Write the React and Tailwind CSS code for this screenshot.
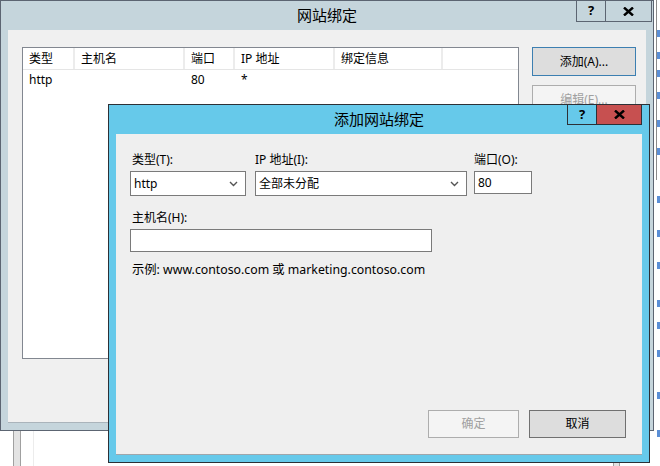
import React from "react";

const font = { fontFamily: '"Noto Sans", "Noto Sans CJK SC", sans-serif' };

const CloseGlyph = ({ className = "" }) => (
  <svg width="11" height="9" viewBox="0 0 11 9" className={className}>
    <path d="M1 0.5 L10 8.5 M10 0.5 L1 8.5" stroke="#000" strokeWidth="2.4" />
  </svg>
);

const Chevron = () => (
  <svg width="9" height="6" viewBox="0 0 9 6">
    <path d="M1 1 L4.5 4.5 L8 1" stroke="#555" strokeWidth="1.4" fill="none" />
  </svg>
);

const columns = [
  { label: "类型", w: "w-[52px]" },
  { label: "主机名", w: "w-[110px]" },
  { label: "端口", w: "w-[50px]" },
  { label: "IP 地址", w: "w-[100px]" },
  { label: "绑定信息", w: "w-[108px]" },
];

const row = ["http", "", "80", "*", ""];

// scattered link fragments of the window behind
const marks = [30, 52, 70, 92, 120, 148, 196, 230, 262, 300, 322, 350, 392, 430];

const SitesBindings = () => (
  <div className="absolute left-0 top-0 w-[654px] h-[431px] border border-[#5c6572] bg-[#c5d5dc] flex flex-col">
    <div className="relative h-[29px] flex items-center justify-center">
      <span className="text-[15px] text-black -mt-[1px]">网站绑定</span>
      <div className="absolute right-[1px] top-[-1px] flex">
        <div className="w-[30px] h-[22px] border border-[#5c6572] flex items-center justify-center text-[13px] font-bold">
          ?
        </div>
        <div className="w-[46px] h-[22px] border border-l-0 border-[#5c6572] flex items-center justify-center">
          <CloseGlyph />
        </div>
      </div>
    </div>
    <div className="mx-[7px] flex-1 mb-[7px] bg-[#f0f0f0] border-b border-[#aab4bb] flex pt-[17px] pl-[14px] gap-[13px]">
      <div className="w-[497px] h-[312px] bg-white border border-[#828790] text-[12px] text-black">
        <div className="flex h-[22px] border-b border-[#e5e5e5]">
          {columns.map((c) => (
            <div key={c.label} className={`${c.w} h-full pl-[6px] flex items-center border-r-2 border-[#ececec]`}>
              {c.label}
            </div>
          ))}
        </div>
        <div className="flex h-[20px]">
          {row.map((v, i) => (
            <div key={i} className={`${columns[i].w} pl-[6px] flex items-center`}>
              {v}
            </div>
          ))}
        </div>
      </div>
      <div className="flex flex-col gap-[9px] text-[12px]">
        <div className="w-[104px] h-[29px] bg-[#dddddd] border border-[#3c7fb1] flex items-center justify-center text-black">
          添加(A)...
        </div>
        <div className="w-[104px] h-[29px] bg-[#f4f4f4] border border-[#adadad] flex items-center justify-center text-[#a0a0a0]">
          编辑(E)...
        </div>
      </div>
    </div>
  </div>
);

const AddBinding = () => (
  <div className="absolute left-[108px] top-[104px] w-[542px] h-[359px] border border-[#2d3036] bg-[#66c9ea] flex flex-col">
    <div className="relative h-[29px] flex items-center justify-center">
      <span className="text-[15px] text-black">添加网站绑定</span>
      <div className="absolute right-[7px] top-[-1px] flex">
        <div className="w-[30px] h-[21px] border border-[#2d3036] flex items-center justify-center text-[13px] font-bold">
          ?
        </div>
        <div className="w-[45px] h-[21px] border border-l-0 border-[#2d3036] bg-[#c75050] flex items-center justify-center">
          <CloseGlyph />
        </div>
      </div>
    </div>
    <div className="mx-[7px] mb-[7px] flex-1 bg-[#efefef] border-b border-[#9fa6ab] flex flex-col text-[12px] text-black pl-[14px] pr-[16px] pt-[17px] pb-[16px]">
      <div className="flex">
        <div className="w-[116px] flex flex-col">
          <span className="h-[20px] pl-[2px]">类型(T):</span>
          <div className="h-[25px] bg-white border border-[#7a7a7a] flex items-center justify-between pl-[3px] pr-[7px]">
            <span>http</span>
            <Chevron />
          </div>
        </div>
        <div className="w-[212px] ml-[9px] flex flex-col">
          <span className="h-[20px]">IP 地址(I):</span>
          <div className="h-[25px] bg-white border border-[#7a7a7a] flex items-center justify-between pl-[3px] pr-[7px]">
            <span>全部未分配</span>
            <Chevron />
          </div>
        </div>
        <div className="w-[58px] ml-[7px] flex flex-col">
          <span className="h-[20px]">端口(O):</span>
          <div className="h-[23px] bg-white border border-[#7a7a7a] flex items-center pl-[3px]">80</div>
        </div>
      </div>
      <span className="mt-[13px] h-[20px] pl-[2px]">主机名(H):</span>
      <div className="w-[302px] h-[23px] bg-white border border-[#7a7a7a]" />
      <span className="mt-[9px] pl-[2px] text-[12.3px]">示例: www.contoso.com 或 marketing.contoso.com</span>
      <div className="mt-auto flex justify-end gap-[10px]">
        <div className="w-[91px] h-[28px] bg-[#f4f4f4] border border-[#adadad] flex items-center justify-center text-[#a0a0a0]">
          确定
        </div>
        <div className="w-[97px] h-[28px] bg-[#dddddd] border border-[#707070] flex items-center justify-center">
          取消
        </div>
      </div>
    </div>
  </div>
);

export default function App() {
  return (
    <div className="relative w-[660px] h-[466px] bg-white overflow-hidden" style={font}>
      {/* background app remnants */}
      <div className="absolute left-[13px] top-[430px] w-[8px] h-[36px] bg-[#e3e3e3] border-x border-[#a0a0a0]" />
      <div className="absolute left-[33px] top-[430px] w-px h-[36px] bg-[#ececec]" />
      <div className="absolute left-[613px] top-[462px] w-[7px] h-[4px] bg-[#e3e3e3] border-x border-[#a0a0a0]" />
      <div className="absolute left-[656px] top-0 w-px h-[180px] bg-[#8a8a8a]" />
      {marks.map((y) => (
        <div key={y} className="absolute left-[657px] w-[3px] h-[7px] bg-[#5b8fd6]" style={{ top: y }} />
      ))}
      <SitesBindings />
      <AddBinding />
    </div>
  );
}
